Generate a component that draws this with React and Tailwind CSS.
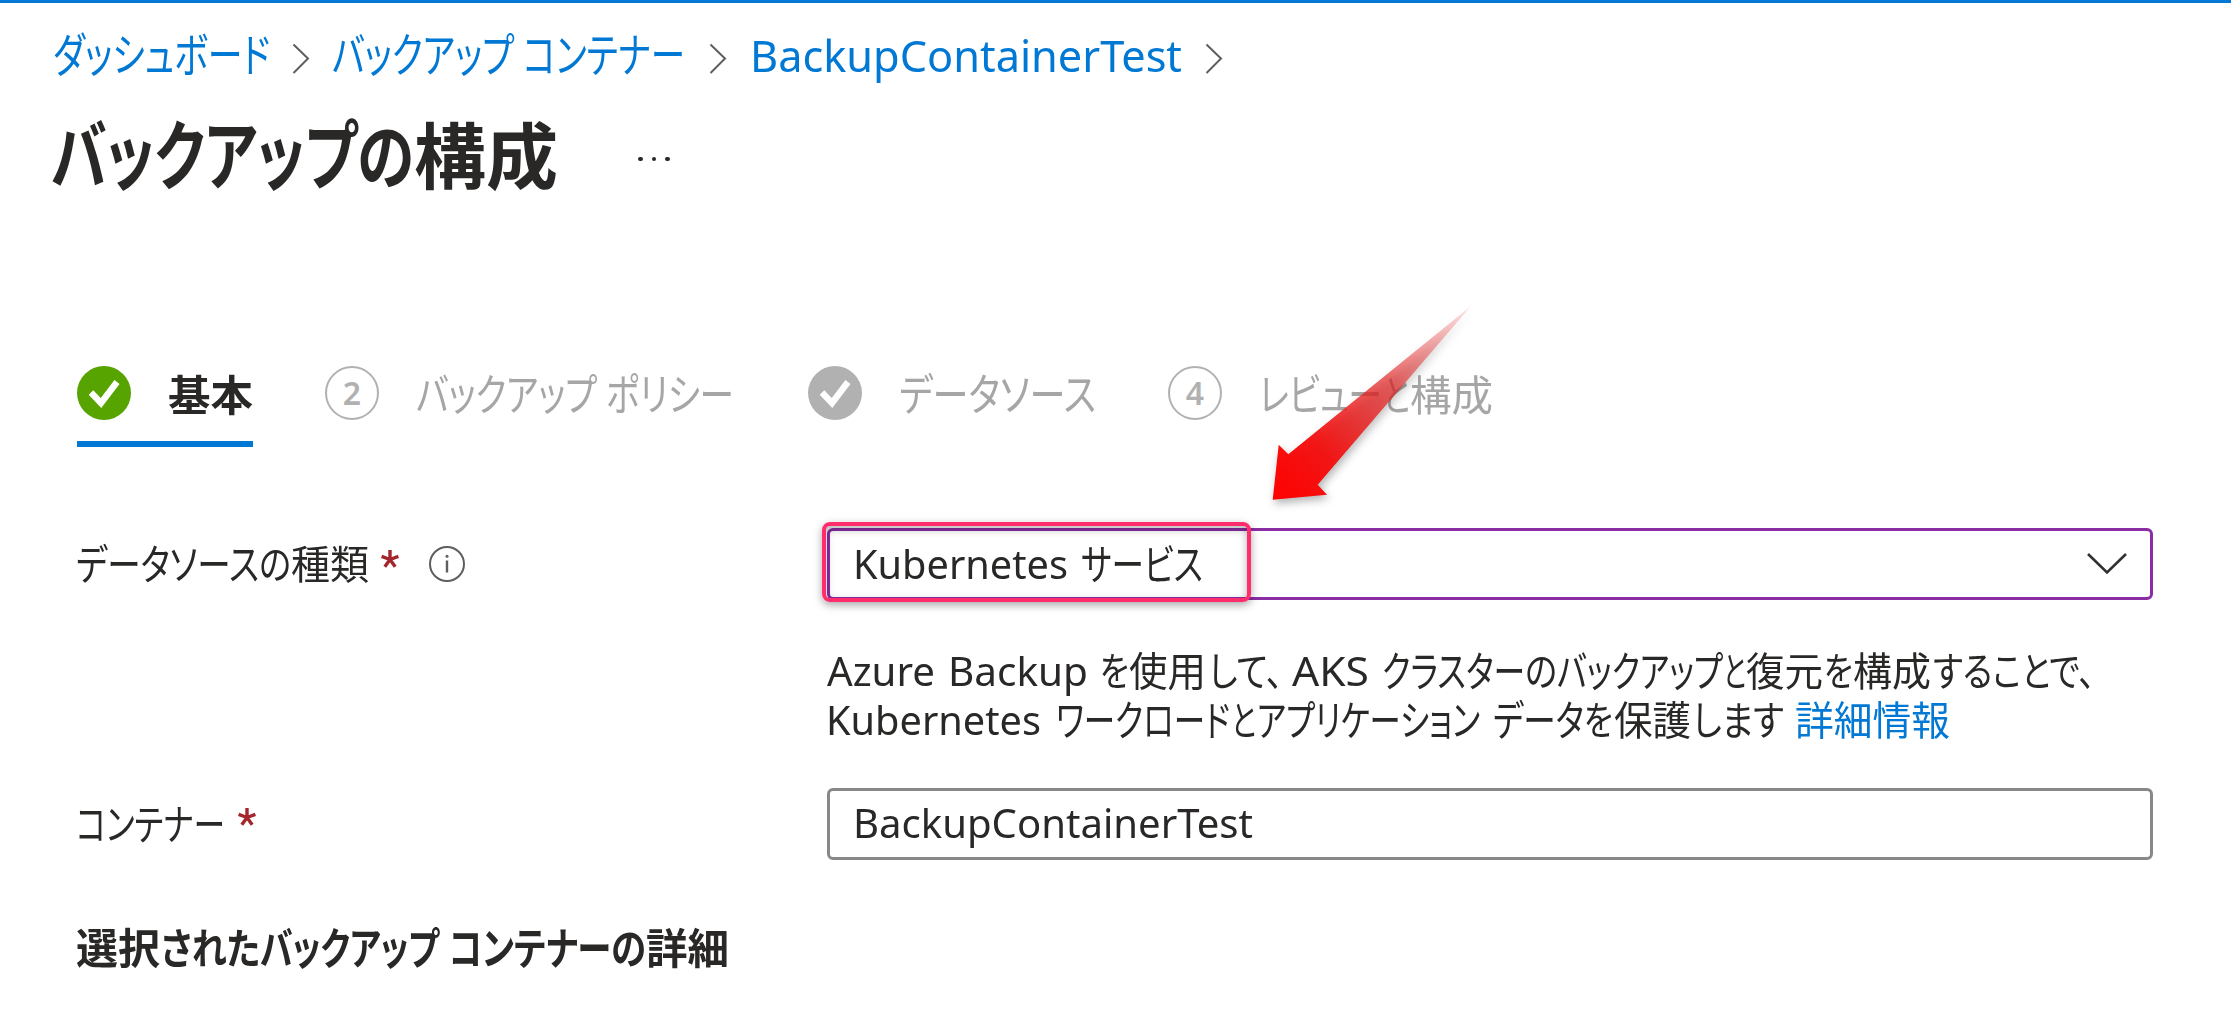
import { useLayoutEffect, useRef } from "react";

// A run of text condensed or widened to fill the width given by its class.
function Run({ className = "", children }) {
  const outer = useRef(null);
  const inner = useRef(null);
  useLayoutEffect(() => {
    const fit = () => {
      const o = outer.current;
      const i = inner.current;
      if (o && i && i.offsetWidth) {
        i.style.transform = "none";
        const natural = i.getBoundingClientRect().width;
        i.style.transform = `scaleX(${o.getBoundingClientRect().width / natural})`;
      }
    };
    fit();
    document.fonts.ready.then(fit);
  }, []);
  return (
    <span ref={outer} className={`inline-block shrink-0 ${className}`}>
      <span ref={inner} className="inline-block origin-left whitespace-nowrap">
        {children}
      </span>
    </span>
  );
}

// Katakana is set slightly larger than the surrounding text.
function Kana({ className = "", children }) {
  return <Run className={`text-[1.05em] ${className}`}>{children}</Run>;
}

function Crumb({ className }) {
  return (
    <svg className={`h-[31px] w-[18px] shrink-0 ${className}`} viewBox="0 0 18 31" fill="none" stroke="#605e5c" strokeWidth="2">
      <path d="M1.5 1.5 L16 15.5 L1.5 30" />
    </svg>
  );
}

function CheckCircle({ className }) {
  return (
    <span className={`flex size-[54px] shrink-0 items-center justify-center rounded-full ${className}`}>
      <svg className="size-[54px]" viewBox="0 0 54 54" fill="none" stroke="#fff" strokeWidth="6.4">
        <path d="M14 26.5 L24 37 L40 16" strokeLinejoin="miter" />
      </svg>
    </span>
  );
}

function NumberCircle({ className = "", children }) {
  return (
    <span className={`flex size-[54px] shrink-0 items-center justify-center rounded-full border-[2.5px] border-[#b1b1b1] text-[32px] leading-none font-semibold text-[#b1b1b1] ${className}`}>
      {children}
    </span>
  );
}

function Asterisk({ className }) {
  return (
    <svg className={`h-[18px] w-[18px] shrink-0 ${className}`} viewBox="0 0 18 18" stroke="#a4262c" strokeWidth="3.4" fill="none">
      <path d="M9 9.5V0M9 9.5L0.6 6.4M9 9.5L17.4 6.4M9 9.5L3.8 16.8M9 9.5L14.2 16.8" />
    </svg>
  );
}

export default function App() {
  return (
    <div className="relative h-[1012px] w-[2231px] overflow-hidden bg-white font-['Noto_Sans','Noto_Sans_CJK_JP',sans-serif] text-[40px] text-[#292827] [font-feature-settings:'palt']" lang="ja">
      <div className="h-[3px] bg-[#0078d4]" />

      <nav className="mt-[22px] flex h-[60px] items-center pl-[53px] text-[44px] leading-[60px] text-[#0078d4]">
        <Kana className="w-[217px]">ダッシュボード</Kana>
        <Crumb className="mt-[7px] ml-[22px]" />
        <Kana className="ml-[22px] w-[182px]">バックアップ</Kana>
        <Kana className="ml-[9px] w-[162px]">コンテナー</Kana>
        <Crumb className="mt-[7px] ml-[24px]" />
        <Run className="ml-[23px] w-[432px]">BackupContainerTest</Run>
        <Crumb className="mt-[7px] ml-[23px]" />
      </nav>

      <header className="mt-[20px] flex h-[100px] items-center pl-[51px] text-[72px] leading-[100px] font-bold">
        <Kana className="w-[306px]">バックアップ</Kana>
        <Run className="w-[57px]">の</Run>
        <Run className="w-[144px]">構成</Run>
        <span className="mt-[8px] ml-[80px] flex gap-[9px]">
          <i className="size-[4.5px] rounded-full bg-[#292827]" />
          <i className="size-[4.5px] rounded-full bg-[#292827]" />
          <i className="size-[4.5px] rounded-full bg-[#292827]" />
        </span>
      </header>

      <div className="mt-[161px] flex h-[81px] items-start pl-[77px] text-[42px] leading-[57px] text-[#a6a6a6]">
        <div className="flex h-[81px] w-[176px] items-start border-b-[6px] border-[#0078d4] font-bold text-[#292827]">
          <CheckCircle className="bg-[#57a300]" />
          <Run className="ml-[37px] w-[85px]">基本</Run>
        </div>
        <NumberCircle className="ml-[72px]">2</NumberCircle>
        <Kana className="ml-[37px] w-[181px]">バックアップ</Kana>
        <Kana className="ml-[9px] w-[128px]">ポリシー</Kana>
        <CheckCircle className="ml-[74px] bg-[#b1b1b1]" />
        <Kana className="ml-[37px] w-[197px]">データソース</Kana>
        <NumberCircle className="ml-[72px]">4</NumberCircle>
        <Kana className="ml-[37px] w-[123px]">レビュー</Kana>
        <Run className="ml-[1px] w-[27px]">と</Run>
        <Run className="w-[83px]">構成</Run>
      </div>

      <div className="mt-[81px] grid grid-cols-[750px_1326px] pl-[77px]">
        <div className="flex h-[72px] items-center leading-[48px]">
          <Kana className="-ml-px w-[183px]">データソース</Kana>
          <Run className="w-[32px]">の</Run>
          <Run className="w-[78px]">種類</Run>
          <Asterisk className="mb-[11px] ml-[12px]" />
          <svg className="ml-[30px] size-[36px]" viewBox="0 0 36 36" fill="none" stroke="#605e5c" strokeWidth="2">
            <circle cx="18" cy="18" r="17" />
            <path d="M18 14.5V26.5" strokeWidth="2.4" />
            <circle cx="18" cy="10.3" r="1.5" fill="#605e5c" stroke="none" />
          </svg>
        </div>
        <div className="relative flex h-[72px] items-center rounded-[6px] border-[3px] border-[#8a2da5] pl-[23px] leading-[48px]">
          <Run className="w-[215px]">Kubernetes</Run>
          <Kana className="ml-[13px] w-[122px]">サービス</Kana>
          <svg className="mr-[22px] ml-auto h-[24px] w-[42px]" viewBox="0 0 42 24" fill="none" stroke="#323130" strokeWidth="2.6">
            <path d="M2 2 L21 20.5 L40 2" />
          </svg>
          <span className="absolute -top-[9px] -left-[8px] h-[80px] w-[429px] rounded-[8px] border-[4px] border-[#ff2d6b] shadow-[0_3px_8px_rgba(0,0,0,0.35),inset_0_3px_9px_rgba(0,0,0,0.3)]" />
        </div>

        <div className="col-start-2 mt-[46px] leading-[49px]">
          <div className="flex h-[49px]">
            <Run className="w-[108px]">Azure</Run>
            <Run className="ml-[13px] w-[140px]">Backup</Run>
            <Run className="ml-[12px] w-[29px]">を</Run>
            <Run className="w-[77px]">使用</Run>
            <Run className="ml-[3px] w-[74px]">して、</Run>
            <Run className="ml-[9px] w-[77px]">AKS</Run>
            <Kana className="ml-[13px] w-[143px]">クラスター</Kana>
            <Run className="w-[32px]">の</Run>
            <Kana className="w-[166px]">バックアップ</Kana>
            <Run className="w-[23px]">と</Run>
            <Run className="w-[77px]">復元</Run>
            <Run className="ml-[1px] w-[29px]">を</Run>
            <Run className="w-[78px]">構成</Run>
            <Run className="ml-[2px] w-[162px]">することで、</Run>
          </div>
          <div className="flex h-[49px]">
            <Run className="-ml-px w-[215px]">Kubernetes</Run>
            <Kana className="ml-[15px] w-[174px]">ワークロード</Kana>
            <Run className="ml-[1px] w-[25px]">と</Run>
            <Kana className="ml-[1px] w-[223px]">アプリケーション</Kana>
            <Kana className="ml-[13px] w-[91px]">データ</Kana>
            <Run className="w-[29px]">を</Run>
            <Run className="ml-[1px] w-[77px]">保護</Run>
            <Run className="ml-[2px] w-[91px]">します</Run>
            <Run className="ml-[11px] w-[155px] text-[#0078d4]">詳細情報</Run>
          </div>
        </div>

        <div className="mt-[44px] flex h-[72px] items-center leading-[48px]">
          <Kana className="-ml-px w-[149px]">コンテナー</Kana>
          <Asterisk className="mb-[15px] ml-[13px]" />
        </div>
        <div className="mt-[44px] flex h-[72px] items-center rounded-[6px] border-[3px] border-[#8a8886] pb-[2px] pl-[23px] leading-[48px]">
          <Run className="w-[400px]">BackupContainerTest</Run>
        </div>
      </div>

      <h2 className="mt-[61px] flex pl-[76px] text-[42px] leading-[54px] font-bold">
        <Run className="w-[84px]">選択</Run>
        <Run className="ml-[1px] w-[99px]">された</Run>
        <Kana className="w-[179px]">バックアップ</Kana>
        <Kana className="ml-[10px] w-[162px]">コンテナー</Kana>
        <Run className="w-[35px]">の</Run>
        <Run className="w-[83px]">詳細</Run>
      </h2>

      <svg className="absolute top-[290px] left-[1240px] h-[230px] w-[260px] overflow-visible drop-shadow-[2px_4px_4px_rgba(0,0,0,0.3)]" viewBox="1240 290 260 230">
        <defs>
          <linearGradient id="arrow" gradientUnits="userSpaceOnUse" x1="1273" y1="500" x2="1471" y2="306">
            <stop offset="0" stopColor="#ff0000" />
            <stop offset="0.25" stopColor="#f40e0e" stopOpacity="0.96" />
            <stop offset="0.6" stopColor="#e42424" stopOpacity="0.68" />
            <stop offset="1" stopColor="#f04040" stopOpacity="0.15" />
          </linearGradient>
        </defs>
        <path d="M1272.7 499.7 L1278.7 444.7 L1288.3 454.3 L1471 306 L1317.7 484.7 L1327 494.7 Z" fill="url(#arrow)" />
      </svg>
    </div>
  );
}
